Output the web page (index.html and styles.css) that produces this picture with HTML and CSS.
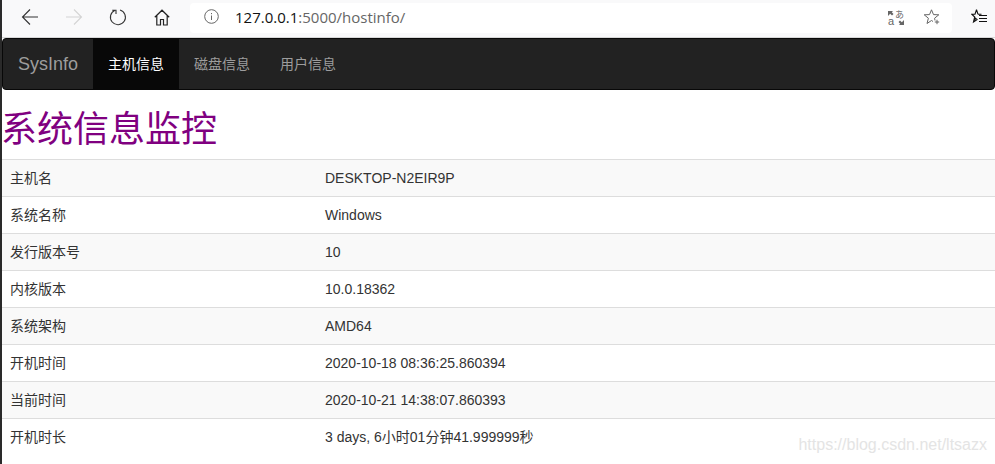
FILE: index.html
```html
<!DOCTYPE html>
<html lang="zh">
<head>
<meta charset="utf-8">
<title>SysInfo</title>
<link rel="stylesheet" href="styles.css">
</head>
<body>
<div class="edge"></div>
<div class="window">
  <header class="toolbar">
    <button class="tool tool-back" aria-label="back"><svg width="18" height="18" viewBox="0 0 18 18"><path d="M17 9H1.500M9 1.500 1.500 9 9 16.500" fill="none" stroke="#333" stroke-width="1.100"/></svg></button>
    <button class="tool tool-fwd" aria-label="forward"><svg width="18" height="18" viewBox="0 0 18 18"><path d="M1 9h15.500M9 1.500 16.500 9 9 16.500" fill="none" stroke="#d4d4d4" stroke-width="1.100"/></svg></button>
    <button class="tool tool-reload" aria-label="reload"><svg width="18" height="18" viewBox="0 0 18 18"><path d="M11 2A7.500 7.500 0 1 1 6 2.300M3.200 2.300H7V6" fill="none" stroke="#333" stroke-width="1.100"/></svg></button>
    <button class="tool tool-home" aria-label="home"><svg width="16" height="17" viewBox="0 0 16 17"><path d="M.8 8.200 8 1.200l7.200 7M2.800 6.500V16h3.700v-5.500h3V16h3.700V6.500" fill="none" stroke="#222" stroke-width="1.200"/></svg></button>
    <div class="address">
      <svg class="info" width="15" height="15" viewBox="0 0 15 15"><circle cx="7.500" cy="7.500" r="6.800" fill="none" stroke="#666"/><path d="M7.500 6.500v4.500M7.500 4v1.200" stroke="#666"/></svg>
      <span class="url"><span class="host">127.0.0.1</span>:5000/hostinfo/</span>
      <svg class="translate" width="18" height="17" viewBox="0 0 18 17"><path d="M1 2h5L4.800 3.200 6.500 5 5 6.500 3.200 4.800 1 7zM17 16h-5l1.200-1.200-1.700-1.800 1.500-1.500 1.800 1.700L17 11z" fill="#666"/><text class="glyph-ja" x="8" y="9">あ</text><text class="glyph-a" x="1" y="16">a</text></svg>
      <svg class="star" width="16" height="16" viewBox="0 0 16 16"><path d="M11 11.500 10.600 9.200 14.800 5.800 9.500 5.600 7.500.8 5.500 5.600.2 5.800 4.400 9.200 3 14.500 7.500 11.500 9 12.500" fill="none" stroke="#666"/><path d="M13 10.800v4.400M10.800 13h4.400" stroke="#666"/></svg>
    </div>
    <svg class="fav" width="17" height="16" viewBox="0 0 17 16"><path d="M5.500.8 7 5.200M5.500.8 4 5.200H.7l3 2.800L2.500 13l4-2.800M7 5.200h3.500" fill="none" stroke="#111" stroke-width="1.100"/><path d="M3.500 8 2.800 12 6 9.500z" fill="#111"/><path d="M8 6.500h8M8 9.500h8M8 12.500h8" stroke="#111"/></svg>
  </header>
  <nav class="navbar">
    <a class="brand">SysInfo</a>
    <a class="nav-link active">主机信息</a>
    <a class="nav-link">磁盘信息</a>
    <a class="nav-link">用户信息</a>
  </nav>
  <h1 class="title">系统信息监控</h1>
  <table class="info-table">
    <tbody>
      <tr><td>主机名</td><td>DESKTOP-N2EIR9P</td></tr>
      <tr><td>系统名称</td><td>Windows</td></tr>
      <tr><td>发行版本号</td><td>10</td></tr>
      <tr><td>内核版本</td><td>10.0.18362</td></tr>
      <tr><td>系统架构</td><td>AMD64</td></tr>
      <tr><td>开机时间</td><td>2020-10-18 08:36:25.860394</td></tr>
      <tr><td>当前时间</td><td>2020-10-21 14:38:07.860393</td></tr>
      <tr><td>开机时长</td><td>3 days, 6小时01分钟41.999999秒</td></tr>
    </tbody>
  </table>
</div>
<div class="watermark">https://blog.csdn.net/ltsazx</div>
</body>
</html>
```
FILE: styles.css
```css
* { box-sizing: border-box; }
html, body { margin: 0; height: 100%; overflow: hidden; background: #fff; }
body {
  display: flex;
  position: relative;
  font-family: "Liberation Sans", "Noto Sans CJK SC", sans-serif;
  font-size: 14px;
  color: #333;
}
.edge { width: 2px; flex: none; background: #2a2a2a; }
.window { flex: 1; min-width: 0; }
.toolbar {
  height: 38px;
  padding-bottom: 1px;
  display: flex;
  align-items: center;
  background: #f9f9fa;
  border-bottom: 1px solid #d8d8d8;
}
.tool {
  width: 18px; height: 18px; padding: 0; border: 0; background: none;
  margin-bottom: 2px;
  display: flex; align-items: center; justify-content: center;
}
.tool-back { margin-left: 19px; }
.tool-fwd { margin-left: 26px; }
.tool-reload { margin-left: 26px; }
.tool-home { margin-left: 26px; }
.address {
  width: 762px; height: 30px; margin-left: 19px;
  display: flex; align-items: center;
  background: #fff; border-radius: 4px;
}
.info { margin-left: 14px; margin-bottom: 3px; }
.url { margin-left: 16px; margin-bottom: 2px; font-family: "Open Sans", sans-serif; font-size: 15px; color: #666; }
.host { color: #111; }
.translate { margin-left: auto; margin-bottom: 2px; overflow: visible; }
.glyph-ja { font-family: "Noto Sans CJK JP", sans-serif; font-size: 9px; fill: #666; }
.glyph-a { font-family: "Liberation Sans", sans-serif; font-size: 11px; fill: #666; }
.star { margin-left: 19px; margin-right: 12px; margin-bottom: 2px; }
.fav { margin-left: 19px; margin-bottom: 2px; }
.navbar {
  height: 52px;
  display: flex;
  background: #222;
  border: 1px solid #080808;
  border-radius: 4px;
}
.brand { padding: 15px; font-size: 18px; line-height: 20px; color: #9d9d9d; }
.nav-link { padding: 15px; line-height: 20px; color: #9d9d9d; }
.active { color: #fff; background: #080808; }
.title {
  margin: 20px 0 9px -1px;
  font-size: 36px; line-height: 40px; font-weight: 400;
  color: purple;
}
.info-table { width: 100%; border-collapse: collapse; border-spacing: 0; }
.info-table td {
  height: 37px; padding: 8px; line-height: 20px;
  border-top: 1px solid #ddd;
}
.info-table td:first-child { width: 315px; }
.info-table tr:nth-child(odd) { background: #f9f9f9; }
.watermark {
  position: absolute; right: 8px; bottom: 10px;
  font-size: 16px; color: #e4e4e4;
}
```
